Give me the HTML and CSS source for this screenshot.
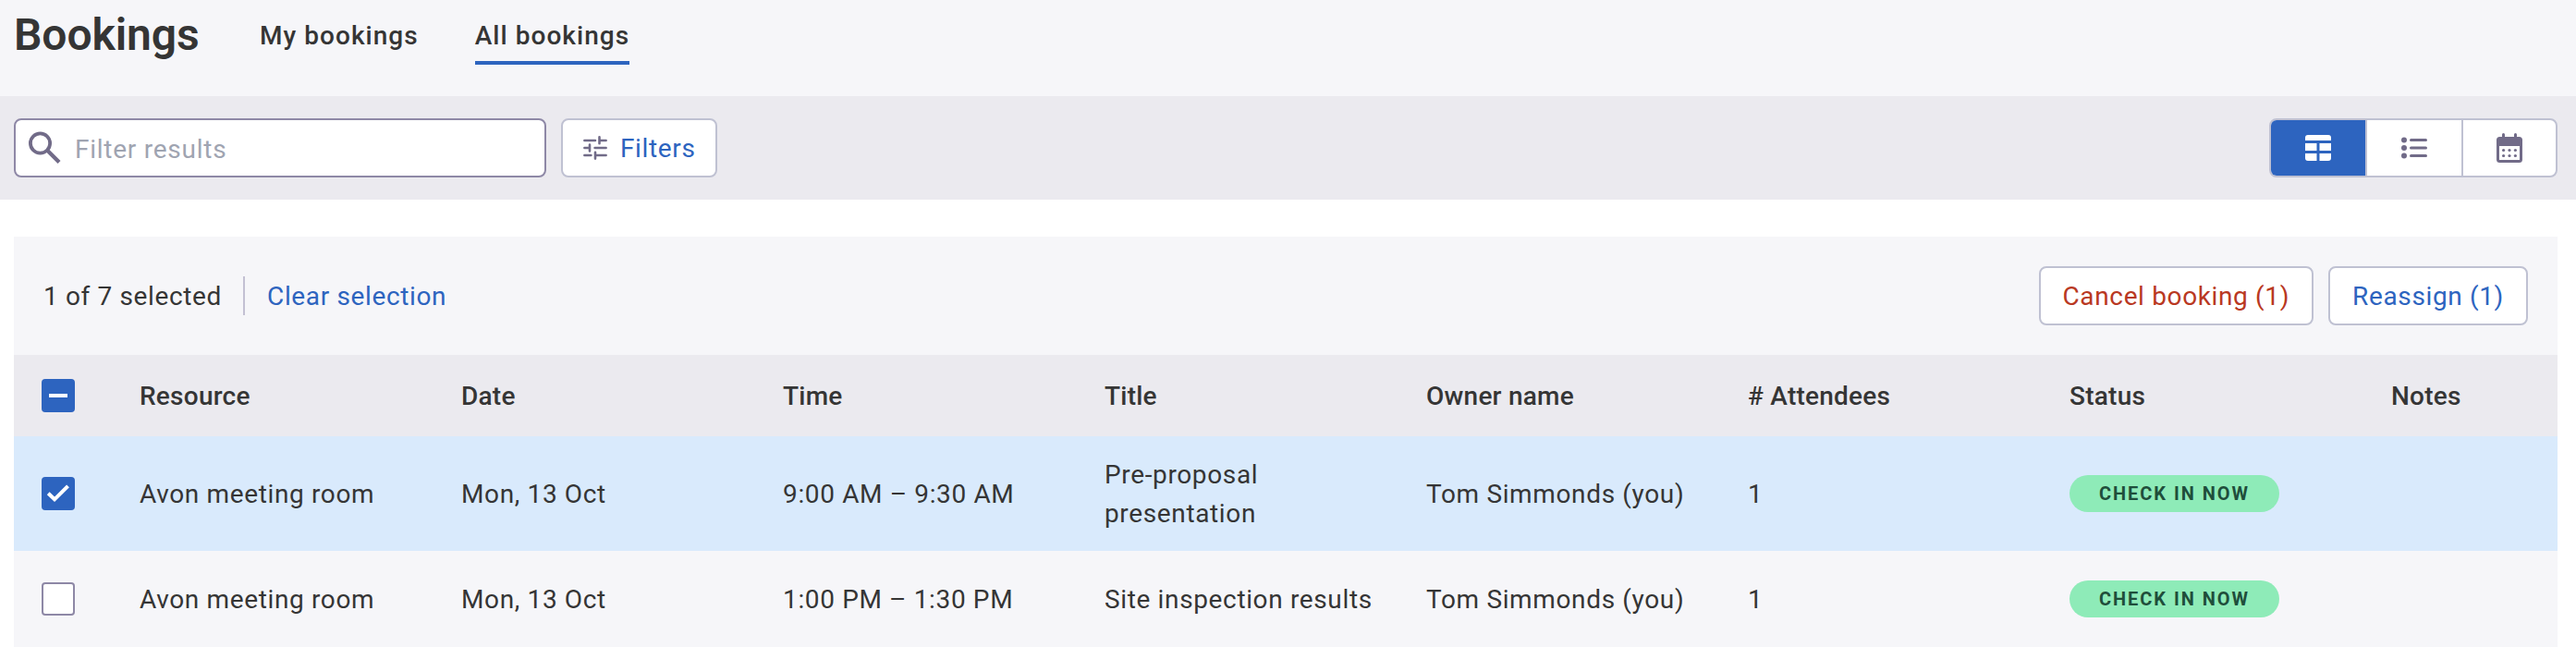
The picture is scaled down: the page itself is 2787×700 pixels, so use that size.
FILE: index.html
```html
<!DOCTYPE html>
<html lang="en">

<head>
	<meta charset="UTF-8">
	<title>Bookings</title>
	<link rel="stylesheet" href="styles.css">
</head>

<body>
	<header class="page-header">
		<h1>Bookings</h1>
		<nav class="tabs">
			<a class="tab">My bookings</a>
			<a class="tab active">All bookings</a>
		</nav>
	</header>

	<div class="toolbar">
		<label class="search">
			<svg width="36" height="36" viewBox="0 0 36 36">
				<circle cx="12.5" cy="13" r="10.6" fill="none" stroke="#716b88" stroke-width="3.8" />
				<path d="M20 20.5L33 33.5" fill="none" stroke="#716b88" stroke-width="4.2" />
			</svg>
			<input type="text" placeholder="Filter results">
		</label>
		<button class="button filters">
			<svg width="26" height="26" viewBox="0 0 26 26" fill="none" stroke="#716b88" stroke-width="2.6" stroke-linecap="round">
				<path d="M1.4 5H13M17.5 1.4V8.2M18 5H24.6M1.4 13H6M7 9.6V16.4M12.6 13H24.6M1.4 21H8.4M13 17.8V24.6M13.5 21H24.6" />
			</svg>
			<span>Filters</span>
		</button>
		<div class="views">
			<button class="view active">
				<svg width="28" height="28" viewBox="0 0 28 28" fill="#fff">
					<path d="M3 0H25A3 3 0 0 1 28 3V6H0V3A3 3 0 0 1 3 0ZM0 9H12.5V17H0ZM15.5 9H28V17H15.5ZM0 20H12.5V28H3A3 3 0 0 1 0 25ZM15.5 20H28V25A3 3 0 0 1 25 28H15.5Z" />
				</svg>
			</button>
			<button class="view">
				<svg width="28" height="24" viewBox="0 0 28 24" fill="#716b88">
					<circle cx="3" cy="3.4" r="3" />
					<circle cx="3" cy="12" r="3" />
					<circle cx="3" cy="20.5" r="3" />
					<path d="M10.5 3.5H26.5M10.5 12H26.5M10.5 20.5H26.5" stroke="#716b88" stroke-width="3" stroke-linecap="round" />
				</svg>
			</button>
			<button class="view">
				<svg width="28" height="32" viewBox="0 0 28 32" fill="#716b88">
					<path fill-rule="evenodd" d="M6 4V1.5A1.5 1.5 0 0 1 9 1.5V4H19V1.5A1.5 1.5 0 0 1 22 1.5V4H24.5A3.5 3.5 0 0 1 28 7.5V28.5A3.5 3.5 0 0 1 24.5 32H3.5A3.5 3.5 0 0 1 0 28.5V7.5A3.5 3.5 0 0 1 3.5 4ZM3 14V29H25V14Z" />
					<circle cx="7.6" cy="18.5" r="1.6" />
					<circle cx="14" cy="18.5" r="1.6" />
					<circle cx="20.4" cy="18.5" r="1.6" />
					<circle cx="7.6" cy="24.5" r="1.6" />
					<circle cx="14" cy="24.5" r="1.6" />
					<circle cx="20.4" cy="24.5" r="1.6" />
				</svg>
			</button>
		</div>
	</div>

	<main class="panel">
		<div class="selection-bar">
			<span class="selected-count">1 of 7 selected</span>
			<a class="clear-link">Clear selection</a>
			<div class="actions">
				<button class="button danger">Cancel booking (1)</button>
				<button class="button">Reassign (1)</button>
			</div>
		</div>
		<div class="table">
			<div class="row head">
				<div class="check">
					<span class="checkbox checked">
						<svg width="36" height="36" viewBox="0 0 36 36">
							<path d="M8 18H28" stroke="#fff" stroke-width="4" />
						</svg>
					</span>
				</div>
				<div>Resource</div>
				<div>Date</div>
				<div>Time</div>
				<div>Title</div>
				<div>Owner name</div>
				<div># Attendees</div>
				<div>Status</div>
				<div>Notes</div>
			</div>
			<div class="row tall selected">
				<div class="check">
					<span class="checkbox checked">
						<svg width="36" height="36" viewBox="0 0 36 36">
							<path d="M7.2 17.8L14 24.3L28.5 9.8" fill="none" stroke="#fff" stroke-width="4" />
						</svg>
					</span>
				</div>
				<div>Avon meeting room</div>
				<div>Mon, 13 Oct</div>
				<div>9:00 AM – 9:30 AM</div>
				<div>Pre-proposal presentation</div>
				<div>Tom Simmonds (you)</div>
				<div>1</div>
				<div><span class="badge">CHECK IN NOW</span></div>
				<div></div>
			</div>
			<div class="row">
				<div class="check"><span class="checkbox"></span></div>
				<div>Avon meeting room</div>
				<div>Mon, 13 Oct</div>
				<div>1:00 PM – 1:30 PM</div>
				<div>Site inspection results</div>
				<div>Tom Simmonds (you)</div>
				<div>1</div>
				<div><span class="badge">CHECK IN NOW</span></div>
				<div></div>
			</div>
		</div>
	</main>
</body>

</html>
```
FILE: styles.css
```css
* {
	box-sizing: border-box;
}

body {
	margin: 0;
	height: 700px;
	overflow: hidden;
	background-color: #fff;
	color: #353535;
	font-family: Roboto, sans-serif;
	font-size: 28px;
	line-height: 42px;
	letter-spacing: 0.64px;
}

button,
input {
	font: inherit;
	letter-spacing: inherit;
}

svg {
	display: block;
	flex: none;
}

.page-header {
	display: flex;
	height: 104px;
	padding: 0 15px;
	background-color: #f6f6f9;
}

	.page-header h1 {
		width: 202px;
		margin: 9px 0 0;
		font-size: 48px;
		font-weight: 600;
		line-height: 58px;
		letter-spacing: -0.1px;
	}

.tabs {
	display: flex;
	align-items: flex-start;
	gap: 61px;
	margin-left: 64px;
	font-weight: 500;
	letter-spacing: 1.04px;
}

.tab {
	height: 70px;
	padding-top: 18px;
}

	.tab.active {
		border-bottom: 4px solid #2d64bf;
	}

.toolbar {
	display: flex;
	align-items: center;
	height: 112px;
	padding: 0 20px 0 15px;
	background-color: #ebeaef;
}

.search {
	display: flex;
	align-items: center;
	width: 576px;
	height: 64px;
	padding-left: 14px;
	border: 2px solid #8e88a6;
	border-radius: 8px;
	background-color: #fff;
}

	.search input {
		flex: 1;
		min-width: 0;
		margin-left: 14px;
		padding: 3px 0 0;
		border: none;
		outline: none;
		background: none;
		letter-spacing: 0.75px;
	}

	.search input::placeholder {
		color: #9fa4b1;
	}

.button {
	display: flex;
	align-items: center;
	height: 64px;
	padding: 2px 24px 0;
	border: 2px solid #bfc1d2;
	border-radius: 8px;
	background-color: #fff;
	color: #2d64bf;
	white-space: nowrap;
}

	.button.danger {
		color: #b93822;
	}

	.button svg {
		margin-top: -2px;
	}

	.button.filters {
		width: 169px;
		margin-left: 16px;
		padding: 2px 22px 0;
		gap: 14px;
	}

.views {
	display: flex;
	width: 312px;
	height: 64px;
	margin-left: auto;
	border: 2px solid #bfc1d2;
	border-radius: 8px;
	background-color: #fff;
	overflow: hidden;
}

.view {
	display: flex;
	align-items: center;
	justify-content: center;
	width: 102px;
	padding: 0;
	border: none;
	background: none;
}

	.view + .view {
		flex: 1 1 104px;
		border-left: 2px solid #bfc1d2;
	}

	.view + .view:last-child {
		flex: none;
	}

	.view.active {
		background-color: #2d64bf;
	}

.panel {
	margin: 40px 20px 0 15px;
	background-color: #f6f6f9;
}

.selection-bar {
	display: flex;
	align-items: center;
	height: 128px;
	padding: 0 32px;
}

.selected-count {
	padding: 2px 23px 0 0;
	border-right: 2px solid #c3c0d3;
	line-height: 40px;
}

.clear-link {
	margin-left: 24px;
	padding-top: 2px;
	color: #2d64bf;
}

.actions {
	display: flex;
	gap: 16px;
	margin-left: auto;
}

.row {
	display: grid;
	grid-template-columns: 136px repeat(7, 348px) 1fr;
	align-items: center;
	height: 104px;
}

	.row > div {
		padding: 2px 40px 0 0;
	}

	.row .check {
		padding: 0 0 0 30px;
	}

	.row.head {
		height: 88px;
		background-color: #ebeaef;
		font-weight: 500;
		letter-spacing: 0.24px;
	}

	.row.tall {
		height: 124px;
	}

	.row.selected {
		background-color: #d9eafc;
	}

.checkbox {
	display: block;
	width: 36px;
	height: 36px;
	border: 2px solid #8e88a6;
	border-radius: 4px;
	background-color: #fff;
}

	.checkbox.checked {
		border: none;
		background-color: #2d64bf;
	}

.badge {
	display: flex;
	align-items: center;
	width: max-content;
	height: 40px;
	margin-top: -2px;
	padding: 0 32px;
	border-radius: 20px;
	background-color: #8eebb8;
	color: #1f4e3b;
	font-size: 20px;
	font-weight: 700;
	letter-spacing: 1.95px;
}
```
